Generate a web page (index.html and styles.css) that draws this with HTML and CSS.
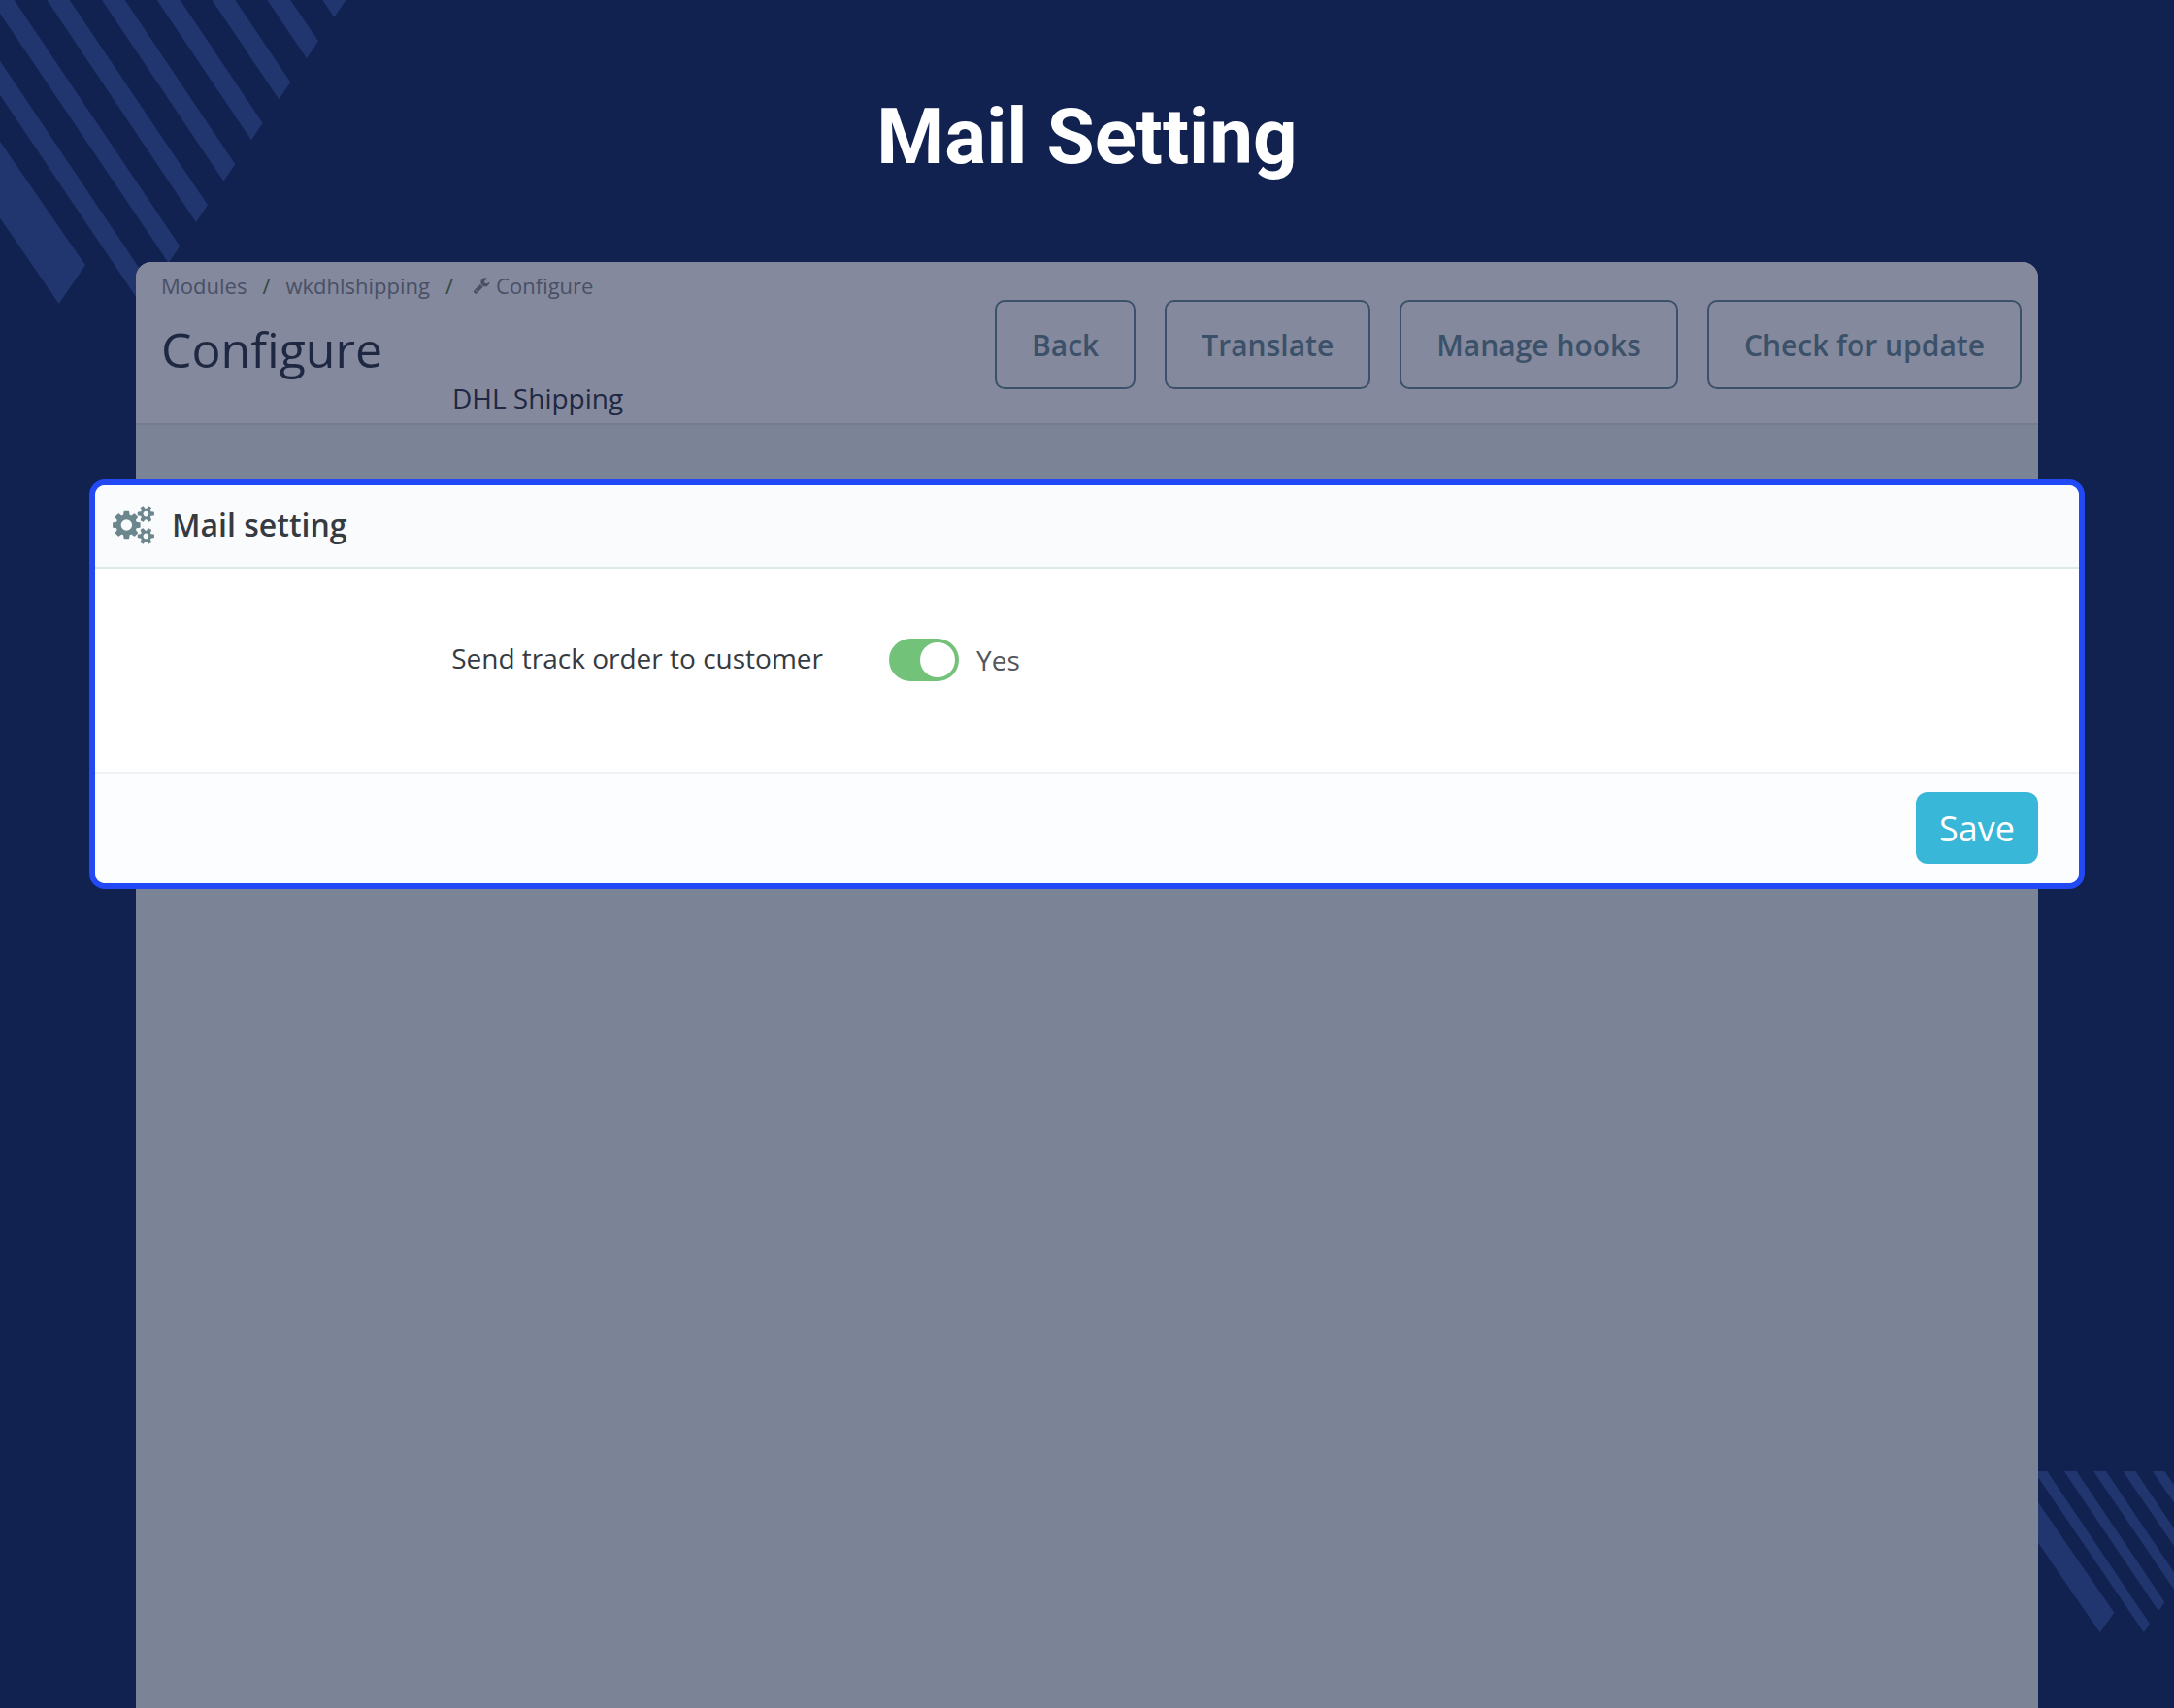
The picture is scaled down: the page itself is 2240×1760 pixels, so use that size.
FILE: index.html
```
<!DOCTYPE html>
<html lang="en">
<head>
  <meta charset="UTF-8" />
  <title>Mail Setting</title>
  <meta name="viewport" content="width=device-width, initial-scale=1" />
  <link rel="stylesheet" href="styles.css">
</head>
<body>

  <svg class="stripes stripes-top" viewBox="0 0 1200 990" aria-hidden="true">
    <polygon points="0,437 264,820 182,939 0,674" />
    <polygon points="0,188 470,888 435,940 0,293" />
    <polygon points="0,0 44,0 556,761 521,813 0,41" />
    <polygon points="145,0 215,0 642,634 606,687" />
    <polygon points="315,0 386,0 727,508 691,560" />
    <polygon points="485,0 557,0 812,381 777,433" />
    <polygon points="655,0 727,0 898,254 862,307" />
    <polygon points="826,0 898,0 984,127 948,181" />
    <polygon points="997,0 1069,0 1033,54" />
  </svg>
  <svg class="stripes stripes-bottom" viewBox="0 0 420 501" aria-hidden="true">
    <polygon points="0,96 235,437 191,499 0,221" />
    <polygon points="0,0 28,0 345,472 327,499 0,19" />
    <polygon points="80,0 119,0 391,405 372,432" />
    <polygon points="171,0 210,0 420,312 420,366" />
    <polygon points="262,0 301,0 420,177 420,231" />
    <polygon points="353,0 391,0 420,43 420,97" />
  </svg>

  <h1 class="page-title">Mail Setting</h1>

  <main class="panel">
    <header class="panel-header">
      <div class="heading">
        <nav class="breadcrumb">
          <a href="#">Modules</a>
          <span>/</span>
          <a href="#">wkdhlshipping</a>
          <span>/</span>
          <a href="#" class="current">
            <svg class="wrench" viewBox="0 0 1792 1792" aria-hidden="true"><path d="M448 1472q0-26-19-45t-45-19-45 19-19 45 19 45 45 19 45-19 19-45zm644-420l-682 682q-37 37-90 37-52 0-91-37l-106-108q-38-36-38-90 0-53 38-91l681-681q39 98 114.500 173.500t173.500 114.500zm634-435q0 39-23 106-47 134-164.500 217.500t-258.500 83.500q-185 0-316.500-131.500t-131.500-316.500 131.500-316.500 316.500-131.500q58 0 121.500 16.500t107.500 46.500q16 11 16 28t-16 28l-293 169v224l193 107q5-3 79-48.500t135.500-81 70.500-35.500q15 0 23.500 10t8.500 25z" /></svg>
            Configure
          </a>
        </nav>
        <h2>Configure</h2>
        <h3>DHL Shipping</h3>
      </div>
      <div class="toolbar">
        <button type="button">Back</button>
        <button type="button">Translate</button>
        <button type="button">Manage hooks</button>
        <button type="button">Check for update</button>
      </div>
    </header>

    <form class="card">
      <div class="card-header">
        <svg class="cogs" viewBox="0 0 1920 1792" aria-hidden="true"><path d="M896 896q0-106-75-181t-181-75-181 75-75 181 75 181 181 75 181-75 75-181zm768 512q0-52-38-90t-90-38-90 38-38 90q0 53 37.500 90.500t90.500 37.500 90.500-37.500 37.500-90.500zm0-1024q0-52-38-90t-90-38-90 38-38 90q0 53 37.500 90.500t90.500 37.500 90.500-37.500 37.500-90.500zm-384 421v185q0 10-7 19.500t-16 10.500l-155 24q-11 35-32 76 34 48 90 115 7 11 7 20 0 12-7 19-23 30-82.500 89.500t-78.500 59.500q-11 0-21-7l-115-90q-37 19-77 31-11 108-23 155-7 24-30 24h-186q-11 0-20-7.500t-10-17.500l-23-153q-34-10-75-31l-118 89q-7 7-20 7-11 0-21-8-144-133-144-160 0-9 7-19 10-14 41-53t47-61q-23-44-35-82l-152-24q-10-1-17-9.500t-7-19.500v-185q0-10 7-19.500t16-10.500l155-24q11-35 32-76-34-48-90-115-7-11-7-20 0-12 7-20 22-30 82-89t79-59q11 0 21 7l115 90q34-18 77-32 11-108 23-154 7-24 30-24h186q11 0 20 7.500t10 17.500l23 153q34 10 75 31l118-89q8-7 20-7 11 0 21 8 144 133 144 160 0 8-7 19-12 16-42 54t-45 60q23 48 34 82l152 23q10 2 17 10.500t7 19.500zm640 533v140q0 16-149 31-12 27-30 52 51 113 51 138 0 4-4 7-122 71-124 71-8 0-46-47t-52-68q-20 2-30 2t-30-2q-14 21-52 68t-46 47q-2 0-124-71-4-3-4-7 0-25 51-138-18-25-30-52-149-15-149-31v-140q0-16 149-31 13-29 30-52-51-113-51-138 0-4 4-7 4-2 35-20t59-34 30-16q8 0 46 46.500t52 67.500q20-2 30-2t30 2q51-71 92-112l6-2q4 0 124 70 4 3 4 7 0 25-51 138 17 23 30 52 149 15 149 31zm0-1024v140q0 16-149 31-12 27-30 52 51 113 51 138 0 4-4 7-122 71-124 71-8 0-46-47t-52-68q-20 2-30 2t-30-2q-14 21-52 68t-46 47q-2 0-124-71-4-3-4-7 0-25 51-138-18-25-30-52-149-15-149-31v-140q0-16 149-31 13-29 30-52-51-113-51-138 0-4 4-7 4-2 35-20t59-34 30-16q8 0 46 46.500t52 67.500q20-2 30-2t30 2q51-71 92-112l6-2q4 0 124 70 4 3 4 7 0 25-51 138 17 23 30 52 149 15 149 31z" /></svg>
        <h3>Mail setting</h3>
      </div>
      <div class="card-body">
        <label for="trackOrder">Send track order to customer</label>
        <div class="switch-field">
          <input type="checkbox" class="switch" id="trackOrder" checked />
          <span>Yes</span>
        </div>
      </div>
      <div class="card-footer">
        <button type="button" class="save">Save</button>
      </div>
    </form>
  </main>

</body>
</html>
```

FILE: styles.css
```
* {
  box-sizing: border-box;
}

body {
  margin: 0;
  min-height: 100vh;
  display: flex;
  flex-direction: column;
  position: relative;
  overflow-x: hidden;
  background: #112150;
  font-family: "Open Sans", sans-serif;
}

h1, h2, h3 {
  margin: 0;
}

button {
  font-family: inherit;
  cursor: pointer;
}

/* background stripes */
.stripes {
  position: absolute;
  fill: #21366f;
}

.stripes-top {
  top: 0;
  left: 0;
  width: 400px;
}

.stripes-bottom {
  right: 0;
  bottom: 77px;
  width: 140px;
}

.page-title {
  padding: 93px 0 81px;
  color: #fff;
  font-family: Roboto, sans-serif;
  font-size: 80px;
  font-weight: 700;
  line-height: 96px;
  text-align: center;
}

.panel {
  flex: 1;
  position: relative;
  margin: 0 6.25%;
  border-radius: 16px 16px 0 0;
  background: #7b8397;
}

.panel-header {
  display: flex;
  justify-content: space-between;
  align-items: flex-start;
  padding: 6px 17px 6px 26px;
  border-bottom: 2px solid #747c91;
  border-radius: 16px 16px 0 0;
  background: #84899d;
}

.breadcrumb {
  display: flex;
  align-items: center;
  gap: 16px;
  font-size: 22px;
  line-height: 36px;
  color: #33483f;
}

.breadcrumb a {
  color: #495066;
  text-decoration: none;
}

.breadcrumb .current {
  display: flex;
  align-items: center;
  gap: 6px;
  margin-left: 4px;
}

.wrench {
  width: 18px;
  height: 18px;
  fill: #495066;
}

.heading h2 {
  margin-top: 18px;
  color: #1f2842;
  font-size: 50px;
  font-weight: 400;
  line-height: 60px;
}

.heading h3 {
  padding-left: 300px;
  color: #1f2842;
  font-size: 28px;
  font-weight: 400;
  line-height: 40px;
}

.toolbar {
  display: flex;
  gap: 30px;
  padding-top: 33px;
}

.toolbar button {
  height: 92px;
  padding: 0 36px;
  border: 2px solid #3b5169;
  border-radius: 10px;
  background: transparent;
  color: #3b5169;
  font-size: 30px;
  font-weight: 600;
}

/* highlighted card sticks out of the panel on both sides */
.card {
  margin: 56px -48px 0;
  border: 6px solid #2149f5;
  border-radius: 16px;
  background: #fff;
  overflow: hidden;
}

.card-header {
  display: flex;
  align-items: center;
  gap: 18px;
  height: 86px;
  padding: 0 18px 2px;
  border-bottom: 2px solid #dfe8e9;
  background: #fafbfd;
}

.card-header h3 {
  color: #363a41;
  font-size: 32px;
  font-weight: 600;
  line-height: 48px;
}

.cogs {
  width: 43px;
  height: 40px;
  fill: #6c868e;
}

.card-body {
  display: grid;
  grid-template-columns: 750px 1fr;
  column-gap: 68px;
  align-items: start;
  padding: 72px 0 94px;
}

.card-body label {
  color: #363a41;
  font-size: 28px;
  line-height: 40px;
  text-align: right;
}

.switch-field {
  display: flex;
  align-items: center;
  gap: 18px;
  color: #53565b;
  font-size: 28px;
  line-height: 40px;
}

.switch {
  appearance: none;
  width: 72px;
  height: 44px;
  margin: 0;
  padding: 4px;
  border-radius: 22px;
  background: #c7ced1;
  cursor: pointer;
}

.switch::before {
  content: "";
  display: block;
  width: 36px;
  height: 36px;
  border-radius: 50%;
  background: #fff;
}

.switch:checked {
  background: #72c279;
}

.switch:checked::before {
  margin-left: auto;
}

.card-footer {
  display: flex;
  justify-content: flex-end;
  padding: 18px 42px 20px;
  border-top: 2px solid #eff1f2;
  background: #fcfdfe;
}

.save {
  height: 74px;
  padding: 0 24px;
  border: 0;
  border-radius: 12px;
  background: #38b7d8;
  color: #fff;
  font-size: 36px;
}
```
